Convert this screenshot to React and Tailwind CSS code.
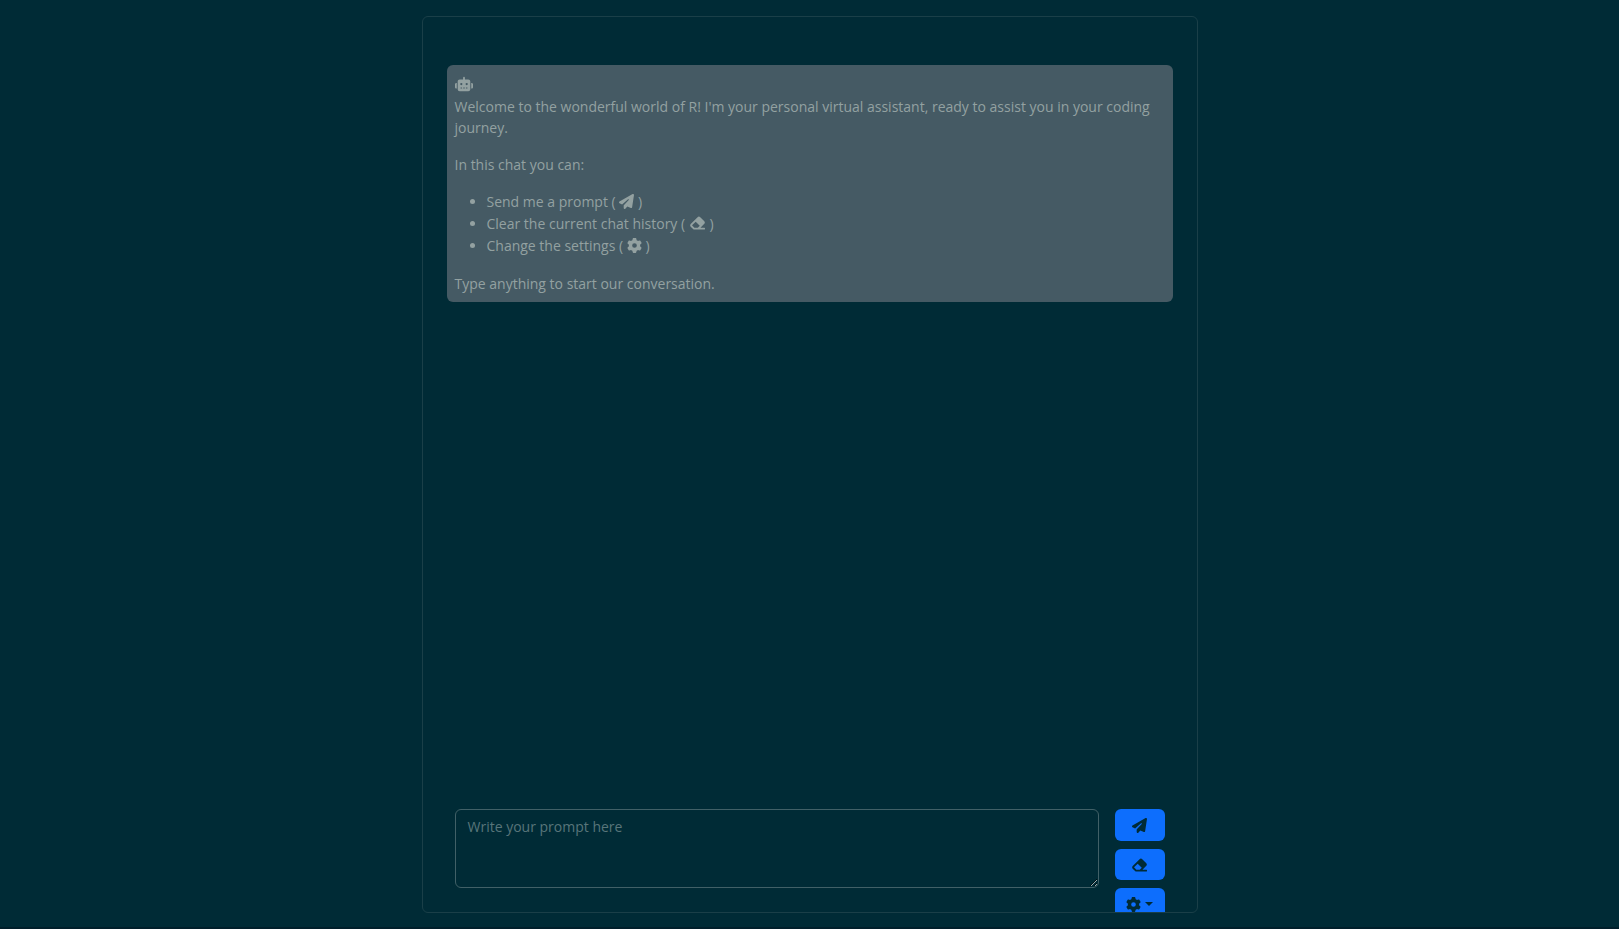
import { FaPaperPlane, FaEraser, FaGear, FaRobot } from "react-icons/fa6";

const buttonStyle =
  "flex w-full items-center justify-center rounded-md bg-[#0d6efd] text-[#002b36]";

export default function App() {
  return (
    <div className="h-screen overflow-hidden bg-[#002b36] font-['Open_Sans','Noto_Sans',sans-serif] text-sm text-[#93a1a1]">
      <div className="h-full border-b-2 border-[#001f2b] pt-4 pb-3.5">
        <main className="mx-auto flex h-full max-w-[776px] flex-col overflow-hidden rounded-md border border-[#1a3f48] px-6 pt-12">
          <section aria-label="Chat history" className="min-h-0 flex-1">
            <article className="rounded-md bg-[#455a64] p-2">
              <FaRobot className="mt-[3px] mb-1 h-4 w-[18px]" />
              <p className="mb-4 leading-[21px]">
                Welcome to the wonderful world of R! I'm your personal virtual assistant, ready to
                assist you in your coding journey.
              </p>
              <p className="mb-4 leading-[21px]">In this chat you can:</p>
              <ul className="mb-4 list-disc pl-8 leading-[22px]">
                <li>
                  Send me a prompt ( <FaPaperPlane className="inline size-[15px] align-[-2px]" /> )
                </li>
                <li>
                  Clear the current chat history ( <FaEraser className="inline h-4 w-[17px] align-[-2px]" /> )
                </li>
                <li>
                  Change the settings ( <FaGear className="inline size-[15px] align-[-2px]" /> )
                </li>
              </ul>
              <p className="leading-[21px]">Type anything to start our conversation.</p>
            </article>
          </section>
          <form className="flex h-[103px] shrink-0 items-start gap-4 px-2" onSubmit={(e) => e.preventDefault()}>
            <textarea
              aria-label="Prompt"
              placeholder="Write your prompt here"
              className="h-[79px] min-w-0 flex-1 resize-y rounded-md border border-[#416067] bg-transparent px-3 py-1.5 leading-[21px] placeholder:text-[#58757a]"
            />
            <div className="flex w-[50px] shrink-0 flex-col gap-2">
              <button type="submit" aria-label="Send" className={`${buttonStyle} h-8`}>
                <FaPaperPlane className="size-[15px]" />
              </button>
              <button type="button" aria-label="Clear history" className={`${buttonStyle} h-[31px]`}>
                <FaEraser className="h-4 w-[17px]" />
              </button>
              <button type="button" aria-label="Settings" className={`${buttonStyle} h-8 gap-1`}>
                <FaGear className="size-[15px]" />
                <svg viewBox="0 0 8 4" className="h-1 w-2" fill="currentColor" aria-hidden="true">
                  <path d="M0 0h8L4 4z" />
                </svg>
              </button>
            </div>
          </form>
        </main>
      </div>
    </div>
  );
}
